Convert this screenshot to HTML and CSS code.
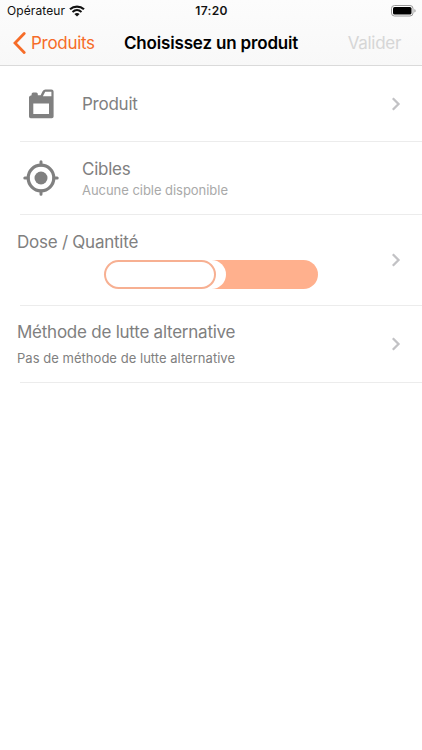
FILE: index.html
```html
<!DOCTYPE html>
<html lang="fr">
<head>
    <meta charset="UTF-8">
    <meta name="viewport" content="width=device-width, initial-scale=1.0">
    <title>Choisissez un produit</title>
    <link rel="stylesheet" href="styles.css">
</head>
<body>
    <header class="header">
        <div class="status">
            <div class="operator">
                <span class="operator-name">Opérateur</span>
                <svg width="16" height="12" viewBox="0 0 16 12">
                    <path d="M1 4.3C5 .7 11 .7 15 4.3" fill="none" stroke="#111" stroke-width="2.2"/>
                    <path d="M3.5 7C6.2 4.6 9.8 4.6 12.5 7" fill="none" stroke="#111" stroke-width="2"/>
                    <path d="M5.4 9C7 7.7 9 7.7 10.6 9L8 11.6z" fill="#111"/>
                </svg>
            </div>
            <span class="clock">17:20</span>
            <svg class="battery" width="26" height="12" viewBox="0 0 26 12">
                <rect x="1.5" y=".5" width="21.5" height="10.5" rx="3" fill="#fff" stroke="#999"/>
                <rect x="3" y="2" width="18.5" height="7.5" rx="1.6" fill="#000"/>
                <path d="M24.4 4v3.6c1.6-.5 1.6-3.1 0-3.6z" fill="#999"/>
            </svg>
        </div>
        <nav class="navbar">
            <a class="back">
                <svg width="13" height="22" viewBox="0 0 13 22">
                    <path d="M11.2 1.5L2 11l9.2 9.5" fill="none" stroke="#f66c28" stroke-width="2.8" stroke-linecap="round"/>
                </svg>
                <span class="back-text">Produits</span>
            </a>
            <h1 class="title">Choisissez un produit</h1>
            <span class="validate">Valider</span>
        </nav>
    </header>

    <main class="list">
        <div class="row row-product">
            <svg class="icon" width="36" height="36" viewBox="0 0 36 36">
                <path fill="#808080" fill-rule="evenodd" d="M6 11.2Q6 9.6 8.6 9.3V8Q8.6 6.4 10.2 6.4H13.2Q14.8 6.4 14.8 8V9.3H17.6L19.6 5.3Q20.6 3.5 22.4 3.5H28.4Q30.6 3.5 30.6 5.6V30.6Q30.6 32.3 28.9 32.3H7.7Q6 32.3 6 30.6ZM22.2 5.7L19.9 10.2H28.4V5.7ZM10.3 17.5V28H26V17.5Z"/>
            </svg>
            <div class="text">
                <span class="label label-product">Produit</span>
            </div>
            <svg class="chevron" width="10" height="14" viewBox="0 0 10 14"><path d="M1.8 1.3L7.5 7 1.8 12.7"/></svg>
        </div>

        <div class="row row-targets">
            <svg class="icon" width="36" height="36" viewBox="0 0 36 36">
                <circle cx="18" cy="18" r="12.8" fill="none" stroke="#808080" stroke-width="3.2"/>
                <circle cx="18" cy="18" r="6.5" fill="#808080"/>
                <path d="M18 1.8V5M18 31v3.2M1.8 18H5M31 18h3.2" stroke="#808080" stroke-width="3" stroke-linecap="round"/>
            </svg>
            <div class="text">
                <span class="label label-targets">Cibles</span>
                <span class="detail detail-targets">Aucune cible disponible</span>
            </div>
        </div>

        <div class="row row-dose">
            <div class="text">
                <span class="label label-dose">Dose / Quantité</span>
                <div class="switch">
                    <div class="switch-gap">
                        <div class="switch-thumb"></div>
                    </div>
                </div>
            </div>
            <svg class="chevron" width="10" height="14" viewBox="0 0 10 14"><path d="M1.8 1.3L7.5 7 1.8 12.7"/></svg>
        </div>

        <div class="row row-method">
            <div class="text">
                <span class="label label-method">Méthode de lutte alternative</span>
                <span class="detail detail-method">Pas de méthode de lutte alternative</span>
            </div>
            <svg class="chevron" width="10" height="14" viewBox="0 0 10 14"><path d="M1.8 1.3L7.5 7 1.8 12.7"/></svg>
        </div>
    </main>
</body>
</html>
```
FILE: styles.css
```css
* { box-sizing: border-box; }

body { margin: 0; background: #fff; color: #808080; font-family: Inter, "Liberation Sans", sans-serif; white-space: nowrap; }
svg { display: block; flex: none; }

/* header */
.header { height: 66px; background: linear-gradient(#fcfcfc, #f8f8f8); border-bottom: 1px solid #dadada; }
.status { display: grid; grid-template-columns: 1fr auto 1fr; align-items: center; height: 21px; padding: 0 6px 0 7px; color: #111; }
.operator { display: flex; align-items: center; gap: 4px; }
.operator-name { font-size: 12px; letter-spacing: 0.1px; line-height: 21px; }
.clock { font-size: 12px; font-weight: 600; letter-spacing: 0.3px; }
.battery { justify-self: end; }
.navbar { display: flex; align-items: center; height: 43px; padding: 0 21px 0 13px; }
.back { display: flex; align-items: center; gap: 5px; width: 111px; color: #f66c28; font-size: 17px; letter-spacing: -0.3px; }
.title { flex: 1; margin: 0; color: #000; font-size: 17px; font-weight: 600; letter-spacing: -0.17px; }
.validate { color: #d6d6d6; font-size: 17px; letter-spacing: -0.3px; }

/* rows */
.row { display: flex; align-items: center; padding: 0 21px 1px 17px; background: linear-gradient(#ececec, #ececec) 20px 100% / 100% 1px no-repeat; }
.row-product { height: 76px; padding-left: 23px; }
.row-targets { height: 73px; padding-left: 23px; }
.row-dose { height: 91px; }
.row-method { height: 77px; }
.icon { margin-right: 23px; }
.text { display: flex; flex-direction: column; flex: 1; align-items: flex-start; }
.label { font-size: 17px; line-height: 22px; letter-spacing: -0.24px; }
.detail { font-size: 13px; line-height: 18px; }
.detail-targets { color: #a9a9a9; margin-top: 1px; letter-spacing: -0.04px; }
.detail-method { margin-top: 6px; letter-spacing: 0.03px; }
.chevron { fill: none; stroke: #c2c2c5; stroke-width: 2.3; }

/* dose switch */
.switch { width: 214px; height: 29px; margin: 7px 0 0 87px; border-radius: 15px; background: #ffb08d; }
.switch-gap { width: 122px; height: 29px; border-radius: 0 15px 15px 0; background: #fff; }
.switch-thumb { width: 112px; height: 29px; border: 2px solid #f7b092; border-radius: 15px; }
```
